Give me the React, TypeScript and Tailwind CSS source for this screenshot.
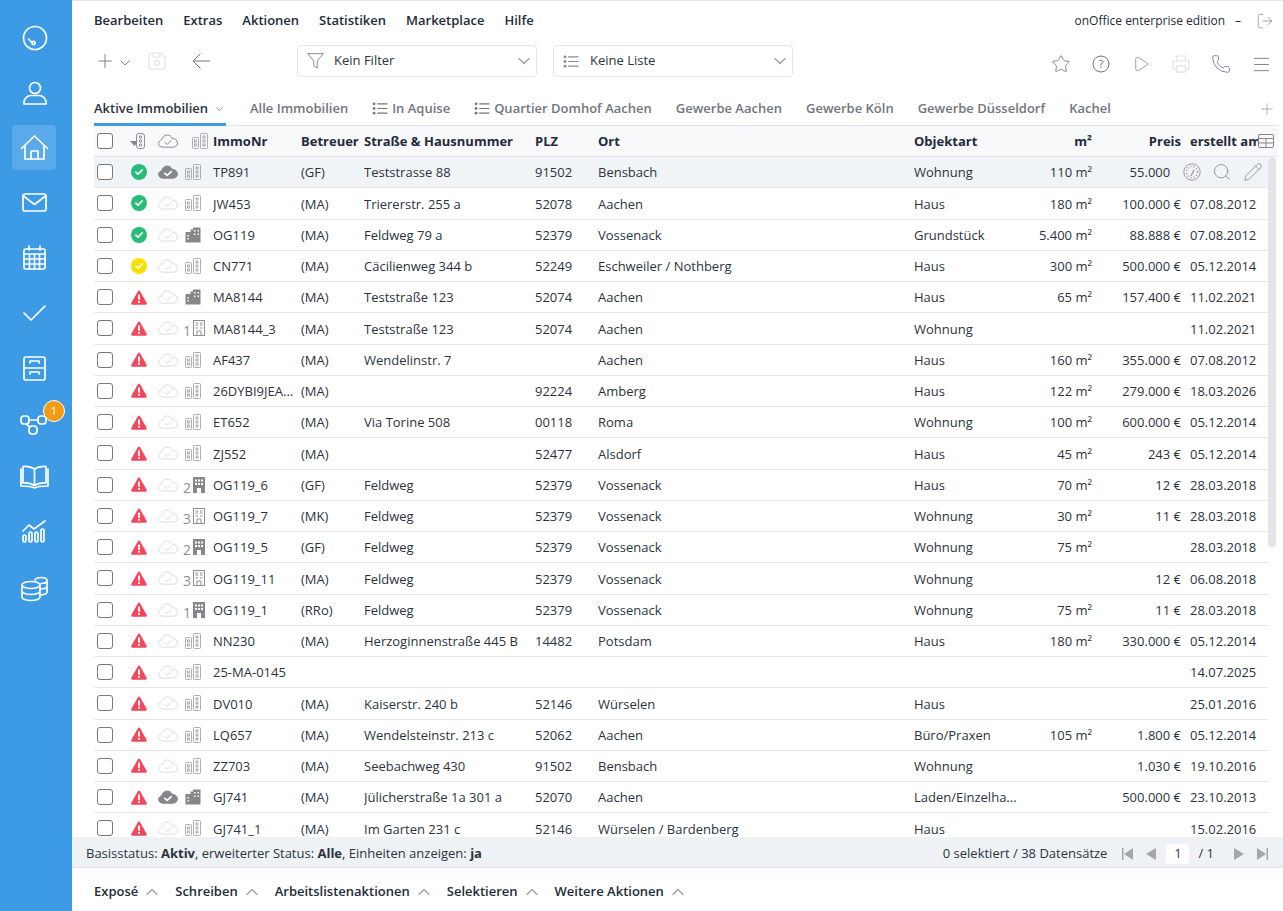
import { ChevronDown, ChevronUp, Plus, Star, Play, Phone, Menu, Search, Pencil, LogOut } from "lucide-react";

type Row = {
  nr: string;
  by?: string;
  street?: string;
  plz?: string;
  city?: string;
  kind?: string;
  qm?: string;
  price?: string;
  date: string;
  status: "ok" | "warn" | "err";
  cloud?: boolean;
  b: "towers" | "solid" | "house" | "houseSolid";
  n?: number;
};

const rows: Row[] = [
  { nr: "TP891", by: "(GF)", street: "Teststrasse 88", plz: "91502", city: "Bensbach", kind: "Wohnung", qm: "110 m²", price: "55.000 €", date: "07.08.2012", status: "ok", cloud: true, b: "towers" },
  { nr: "JW453", by: "(MA)", street: "Triererstr. 255 a", plz: "52078", city: "Aachen", kind: "Haus", qm: "180 m²", price: "100.000 €", date: "07.08.2012", status: "ok", b: "towers" },
  { nr: "OG119", by: "(MA)", street: "Feldweg 79 a", plz: "52379", city: "Vossenack", kind: "Grundstück", qm: "5.400 m²", price: "88.888 €", date: "07.08.2012", status: "ok", b: "solid" },
  { nr: "CN771", by: "(MA)", street: "Cäcilienweg 344 b", plz: "52249", city: "Eschweiler / Nothberg", kind: "Haus", qm: "300 m²", price: "500.000 €", date: "05.12.2014", status: "warn", b: "towers" },
  { nr: "MA8144", by: "(MA)", street: "Teststraße 123", plz: "52074", city: "Aachen", kind: "Haus", qm: "65 m²", price: "157.400 €", date: "11.02.2021", status: "err", b: "solid" },
  { nr: "MA8144_3", by: "(MA)", street: "Teststraße 123", plz: "52074", city: "Aachen", kind: "Wohnung", date: "11.02.2021", status: "err", b: "house", n: 1 },
  { nr: "AF437", by: "(MA)", street: "Wendelinstr. 7", city: "Aachen", kind: "Haus", qm: "160 m²", price: "355.000 €", date: "07.08.2012", status: "err", b: "towers" },
  { nr: "26DYBI9JEA...", by: "(MA)", plz: "92224", city: "Amberg", kind: "Haus", qm: "122 m²", price: "279.000 €", date: "18.03.2026", status: "err", b: "towers" },
  { nr: "ET652", by: "(MA)", street: "Via Torine 508", plz: "00118", city: "Roma", kind: "Wohnung", qm: "100 m²", price: "600.000 €", date: "05.12.2014", status: "err", b: "towers" },
  { nr: "ZJ552", by: "(MA)", plz: "52477", city: "Alsdorf", kind: "Haus", qm: "45 m²", price: "243 €", date: "05.12.2014", status: "err", b: "towers" },
  { nr: "OG119_6", by: "(GF)", street: "Feldweg", plz: "52379", city: "Vossenack", kind: "Haus", qm: "70 m²", price: "12 €", date: "28.03.2018", status: "err", b: "houseSolid", n: 2 },
  { nr: "OG119_7", by: "(MK)", street: "Feldweg", plz: "52379", city: "Vossenack", kind: "Wohnung", qm: "30 m²", price: "11 €", date: "28.03.2018", status: "err", b: "house", n: 3 },
  { nr: "OG119_5", by: "(GF)", street: "Feldweg", plz: "52379", city: "Vossenack", kind: "Wohnung", qm: "75 m²", date: "28.03.2018", status: "err", b: "houseSolid", n: 2 },
  { nr: "OG119_11", by: "(MA)", street: "Feldweg", plz: "52379", city: "Vossenack", kind: "Wohnung", price: "12 €", date: "06.08.2018", status: "err", b: "house", n: 3 },
  { nr: "OG119_1", by: "(RRo)", street: "Feldweg", plz: "52379", city: "Vossenack", kind: "Wohnung", qm: "75 m²", price: "11 €", date: "28.03.2018", status: "err", b: "houseSolid", n: 1 },
  { nr: "NN230", by: "(MA)", street: "Herzoginnenstraße 445 B", plz: "14482", city: "Potsdam", kind: "Haus", qm: "180 m²", price: "330.000 €", date: "05.12.2014", status: "err", b: "towers" },
  { nr: "25-MA-0145", date: "14.07.2025", status: "err", b: "towers" },
  { nr: "DV010", by: "(MA)", street: "Kaiserstr. 240 b", plz: "52146", city: "Würselen", kind: "Haus", date: "25.01.2016", status: "err", b: "towers" },
  { nr: "LQ657", by: "(MA)", street: "Wendelsteinstr. 213 c", plz: "52062", city: "Aachen", kind: "Büro/Praxen", qm: "105 m²", price: "1.800 €", date: "05.12.2014", status: "err", b: "towers" },
  { nr: "ZZ703", by: "(MA)", street: "Seebachweg 430", plz: "91502", city: "Bensbach", kind: "Wohnung", price: "1.030 €", date: "19.10.2016", status: "err", b: "towers" },
  { nr: "GJ741", by: "(MA)", street: "Jülicherstraße 1a 301 a", plz: "52070", city: "Aachen", kind: "Laden/Einzelha...", price: "500.000 €", date: "23.10.2013", status: "err", cloud: true, b: "solid" },
  { nr: "GJ741_1", by: "(MA)", street: "Im Garten 231 c", plz: "52146", city: "Würselen / Bardenberg", kind: "Haus", date: "15.02.2016", status: "err", b: "towers" },
];

function Side({ d, active, badge }: { d: React.ReactNode; active?: boolean; badge?: boolean }) {
  return (
    <div className="relative flex h-[55.2px] w-[72px] items-center justify-center">
      {active && <div className="absolute left-[12px] top-[5px] h-[45px] w-[44px] rounded bg-[#5aa9ea]" />}
      <svg viewBox="0 0 32 32" className="relative -ml-[5px] h-[32px] w-[32px]" fill="none" stroke="#fff" strokeWidth="1.7" strokeLinecap="round" strokeLinejoin="round">
        {d}
      </svg>
      {badge && (
        <span className="absolute left-[43px] top-[4px] flex h-[22px] w-[22px] items-center justify-center rounded-full border border-white bg-[#f39c12] text-[11px] text-white">
          1
        </span>
      )}
    </div>
  );
}

function Sidebar() {
  return (
    <div className="flex h-full w-[72px] shrink-0 flex-col bg-[#3d9be5] pt-[10px]">
      <Side d={<><circle cx="17" cy="16" r="11.5" /><circle cx="15.5" cy="21" r="1.6" /><path d="M14 20.5 L10.5 17" /></>} />
      <Side d={<><circle cx="17" cy="11" r="5.5" /><path d="M6 27 v-1.5 a7 7 0 0 1 7-7 h8 a7 7 0 0 1 7 7 V27 Z" /></>} />
      <Side active d={<><path d="M3.5 16.5 L16.5 4 L29.5 16.5" /><path d="M7 14 V27 H26 V14" /><path d="M13 27 V19 H20 V27" /></>} />
      <Side d={<><rect x="5" y="7" width="23" height="17" rx="2" /><path d="M5.5 9 L16.5 17.5 L27.5 9" /></>} />
      <Side d={<><rect x="6" y="7" width="21" height="20" rx="1.5" /><path d="M6 12 H27 M6 17 H27 M6 22 H27 M11.5 12 V27 M16.5 12 V27 M21.5 12 V27 M11 4 V8 M22 4 V8" /></>} />
      <Side d={<path d="M6 15 L13 22 L27 8" />} />
      <Side d={<g transform="translate(0 -1)"><rect x="6" y="5" width="21" height="23" rx="2" /><path d="M6 16 H27 M12 9 H21 V11 M12 20 H21 V22 M12 9 V11 M12 20 V22" /></g>} />
      <Side badge d={<g transform="translate(-1 -3)"><rect x="4" y="11" width="8" height="8" rx="3" /><rect x="21" y="11" width="8" height="8" rx="3" /><rect x="12" y="21" width="8" height="8" rx="3" /><path d="M12 15 H21 M9 19 L13 22" /></g>} />
      <Side d={<g transform="translate(0 -3)"><path d="M16.5 9 C13 6.5 9 6 5 6.5 V23 C9 22.5 13 23 16.5 25.5 C20 23 24 22.5 28 23 V6.5 C24 6 20 6.5 16.5 9 Z M16.5 9 V25.5" /><path d="M3 9 V26 C8 26 13 26 16.5 28 C20 26 25 26 30 26 V9" /></g>} />
      <Side d={<g transform="translate(0 -3)"><path d="M5 16 L11 10 L16 14 L27 6" /><rect x="5" y="20" width="3" height="7" rx="1.5" /><rect x="11" y="17" width="3" height="10" rx="1.5" /><rect x="17" y="17" width="3" height="10" rx="1.5" /><rect x="23" y="14" width="3" height="13" rx="1.5" /></g>} />
      <Side d={<g transform="translate(0 -1)"><ellipse cx="13" cy="13" rx="9" ry="3.5" /><path d="M4 13 V25 C4 27 8 28.5 13 28.5 S22 27 22 25 V13 M4 19 C4 21 8 22.5 13 22.5 S22 21 22 19" /><path d="M17 8 C18 6 21 5.5 23 5.5 C27 5.5 29 7 29 8.5 V20 C29 21.5 26.5 22.5 23 22.8 M23 11.5 C26 11.5 29 10.5 29 8.5 M23 17 C26 17 29 16 29 14" /></g>} />
    </div>
  );
}

function Check() {
  return <div className="ml-[3px] h-[16px] w-[16px] shrink-0 rounded-[3px] border border-[#77797c] bg-white" />;
}

function Status({ s }: { s: Row["status"] }) {
  if (s === "err") {
    return (
      <svg viewBox="0 0 16 15" className="h-[15px] w-[16px]">
        <path d="M8 0.6 C8.5 0.6 8.9 0.9 9.1 1.3 L15.6 12.8 C16.1 13.7 15.5 14.7 14.5 14.7 H1.5 C0.5 14.7 -0.1 13.7 0.4 12.8 L6.9 1.3 C7.1 0.9 7.5 0.6 8 0.6 Z" fill="#f4465c" />
        <rect x="7.1" y="4.6" width="1.9" height="5.2" fill="#fff" />
        <rect x="7.1" y="10.9" width="1.9" height="1.9" fill="#fff" />
      </svg>
    );
  }
  return (
    <svg viewBox="0 0 16 16" className="h-[16px] w-[16px]">
      <circle cx="8" cy="8" r="8" fill={s === "ok" ? "#27bd78" : "#f6e100"} />
      <path d="M4.8 8.2 L7 10.2 L11.2 6" fill="none" stroke="#fff" strokeWidth="1.7" strokeLinecap="round" strokeLinejoin="round" />
    </svg>
  );
}

function Cloud({ on, head }: { on?: boolean; head?: boolean }) {
  const line = head ? "#8a8d91" : "#dcdde0";
  return (
    <svg viewBox="0 0 20 14" className="h-[14px] w-[20px]">
      <path
        d="M5 13.2 C2.4 13.2 0.6 11.6 0.6 9.4 C0.6 7.5 2 6.1 3.8 5.8 C4.2 3.2 6.3 1 9.2 1 C11.6 1 13.4 2.4 14.2 4.4 C17 4.4 19.4 6.2 19.4 9 C19.4 11.5 17.4 13.2 14.8 13.2 Z"
        fill={on ? "#85878b" : "none"}
        stroke={on ? "#85878b" : line}
        strokeWidth="1"
      />
      <path d="M6.8 8.3 L9.2 10.4 L13.2 6.6" fill="none" stroke={on ? "#fff" : line} strokeWidth={on ? 1.7 : 1} strokeLinecap="round" strokeLinejoin="round" />
    </svg>
  );
}

function Towers() {
  return (
    <svg viewBox="0 0 16 16" className="h-[16px] w-[16px]" fill="none" stroke="#9a9c9f" strokeWidth="0.8">
      <rect x="0.5" y="4.5" width="6" height="11" rx="0.8" />
      <rect x="8.5" y="0.5" width="7" height="15" rx="0.8" />
      <rect x="2.5" y="7" width="2" height="2" />
      <rect x="2.5" y="11" width="2" height="2" />
      <rect x="11" y="3" width="2" height="2" />
      <rect x="11" y="7" width="2" height="2" />
      <rect x="11" y="11" width="2" height="2" />
    </svg>
  );
}

function Building({ b, n }: { b: Row["b"]; n?: number }) {
  if (b === "towers") return <Towers />;
  if (b === "solid") {
    return (
      <svg viewBox="0 0 16 16" className="h-[16px] w-[16px]">
        <path d="M0.5 5 H5.5 V2.5 H8 V0.5 H15.5 V15.5 H0.5 Z" fill="#85878b" />
        <path d="M2.5 8 H4 V9.5 H2.5 Z M2.5 11 H4 V12.5 H2.5 Z M9 3 H10.5 V4.5 H9 Z M12.5 3 H14 V4.5 H12.5 Z M9 6.5 H10.5 V8 H9 Z M12.5 6.5 H14 V8 H12.5 Z" fill="#fff" />
      </svg>
    );
  }
  const solid = b === "houseSolid";
  return (
    <div className="flex items-end">
      <span className="mr-[2px] translate-y-[2px] text-[14px] leading-[14px] text-[#8c8e92]">{n}</span>
      <svg viewBox="0 0 12 16" className="h-[16px] w-[12px]">
        {solid ? (
          <>
            <rect x="0" y="0" width="12" height="16" fill="#85878b" />
            <path d="M2 2.5 H4 V4.5 H2 Z M5 2.5 H7 V4.5 H5 Z M8 2.5 H10 V4.5 H8 Z M2 6 H4 V8 H2 Z M5 6 H7 V8 H5 Z M8 6 H10 V8 H8 Z" fill="#fff" />
            <rect x="4" y="11" width="4" height="5" fill="#fff" />
          </>
        ) : (
          <>
            <rect x="0.5" y="0.5" width="11" height="15" fill="none" stroke="#8c8e92" />
            <path d="M2.5 3 H5 M7 3 H9.5 M2.5 5 H5 M7 5 H9.5 M2.5 8 H5 M7 8 H9.5" stroke="#8c8e92" strokeWidth="1.1" />
            <path d="M4 15.5 V11 H8 V15.5" fill="none" stroke="#8c8e92" />
          </>
        )}
      </svg>
    </div>
  );
}

function ListIcon({ cls }: { cls: string }) {
  return (
    <svg viewBox="0 0 16 14" className={cls} fill="none" stroke="currentColor">
      <circle cx="1.6" cy="2" r="1.5" fill="currentColor" stroke="none" />
      <circle cx="1.6" cy="7" r="1.5" fill="currentColor" stroke="none" />
      <circle cx="1.6" cy="12" r="1.5" fill="currentColor" stroke="none" />
      <path d="M5 2 H16 M5 7 H16 M5 12 H16" strokeWidth="1.2" />
    </svg>
  );
}

function Select({ icon, label }: { icon: React.ReactNode; label: string }) {
  return (
    <div className="flex h-[32px] w-[240px] items-center rounded border border-[#e3e5ea] bg-white pl-[9px] pr-[2px]">
      <span className="flex w-[27px] text-[#868a92]">{icon}</span>
      <span className="flex-1 pb-[1px] text-[13px] text-[#2c3340]">{label}</span>
      <ChevronDown size={20} strokeWidth={1.5} className="-mt-[1px] text-[#9a9da3]" />
    </div>
  );
}

function Gauge({ cls }: { cls: string }) {
  return (
    <svg viewBox="0 0 18 18" className={cls} fill="none" stroke="#8f9093" strokeWidth="0.9">
      <circle cx="9" cy="9" r="8.2" />
      <circle cx="9" cy="9" r="5.6" strokeWidth="1.4" strokeDasharray="1 2" />
      <path d="M8 13 L11 7" strokeWidth="1.1" />
    </svg>
  );
}

function TableRow({ r, hover }: { r: Row; hover?: boolean }) {
  return (
    <div className={`relative flex h-[31.25px] shrink-0 items-center border-b border-[#e6e7ea] text-[13px] text-[#2c3340] ${hover ? "bg-[#f1f4f7]" : "bg-white"}`}>
      <div className="w-[36px]"><Check /></div>
      <div className="flex w-[28px] pl-[1px]"><Status s={r.status} /></div>
      <div className="flex w-[27px]"><Cloud on={r.cloud} /></div>
      <div className={`flex w-[28px] ${r.n ? "justify-end pr-[8px]" : ""}`}><Building b={r.b} n={r.n} /></div>
      <div className="w-[88px] truncate pr-[2px] pt-[2px]">{r.nr}</div>
      <div className="w-[63px] pt-[2px]">{r.by}</div>
      <div className="w-[171px] truncate pt-[2px]">{r.street}</div>
      <div className="w-[63px] pt-[2px]">{r.plz}</div>
      <div className="w-[316px] truncate pt-[2px]">{r.city}</div>
      <div className="w-[103px] truncate pt-[2px]">{r.kind}</div>
      <div className="w-[75px] pt-[2px] text-right">{r.qm}</div>
      <div className="w-[89px] pt-[2px] text-right">{r.price}</div>
      <div className="ml-[9px] w-[78px] pt-[2px]">{r.date}</div>
      {hover && (
        <div className="absolute right-0 top-0 flex h-[30px] w-[98px] items-center justify-between bg-[#f1f4f7] pl-[13px] pr-[5px]">
          <Gauge cls="h-[18px] w-[18px]" />
          <Search size={20} strokeWidth={1} className="text-[#85878b]" />
          <Pencil size={20} strokeWidth={1} className="text-[#85878b]" />
        </div>
      )}
    </div>
  );
}

export default function App() {
  return (
    <div className="flex h-[911px] w-[1283px] overflow-hidden bg-white font-['Open_Sans',sans-serif]">
      <Sidebar />
      <div className="flex min-w-0 flex-1 flex-col border-t border-[#e4e4e6]">
        <div className="flex h-[38px] shrink-0 items-center pl-[22px] pr-[9px] pt-[2px] text-[13px] font-semibold text-[#232b3a]">
          <div className="flex gap-[20px]">
            <span>Bearbeiten</span>
            <span>Extras</span>
            <span>Aktionen</span>
            <span>Statistiken</span>
            <span>Marketplace</span>
            <span>Hilfe</span>
          </div>
          <div className="ml-auto flex items-center text-[12px] font-normal">
            <span>onOffice enterprise edition</span>
            <span className="ml-[10px]">–</span>
            <LogOut size={18} strokeWidth={1} className="ml-[15px] text-[#868a92]" />
          </div>
        </div>

        <div className="flex h-[44px] shrink-0 items-center pl-[22px] pr-[2px]">
          <Plus size={22} strokeWidth={1} className="text-[#6f7480]" />
          <ChevronDown size={16} strokeWidth={1.5} className="ml-[1px] mt-[4px] text-[#80848c]" />
          <svg viewBox="0 0 18 18" className="ml-[15px] h-[18px] w-[18px]" fill="none" stroke="#dfe2e8" strokeWidth="1.1">
            <path d="M1 3 a2 2 0 0 1 2-2 H13 L17 5 V15 a2 2 0 0 1-2 2 H3 a2 2 0 0 1-2-2 Z" />
            <path d="M5 1 V5 H12 V1" />
            <circle cx="9" cy="11" r="2.4" />
          </svg>
          <svg viewBox="0 0 18 16" className="ml-[26px] h-[16px] w-[18px]" fill="none" stroke="#6f7480">
            <path d="M18 8 H1 M8.5 0.5 L1 8 L8.5 15.5" />
          </svg>
          <div className="ml-[87px] flex gap-[16px]">
            <Select
              label="Kein Filter"
              icon={
                <svg viewBox="0 0 17 16" className="h-[16px] w-[17px]" fill="none" stroke="currentColor">
                  <path d="M0.7 0.7 H16.3 L10.2 8 V15 L6.8 12.6 V8 Z" strokeLinejoin="round" />
                </svg>
              }
            />
            <Select label="Keine Liste" icon={<ListIcon cls="h-[13px] w-[16px]" />} />
          </div>
          <div className="ml-auto mt-[6px] flex items-center [&>*]:w-[40px]">
            <span className="flex justify-center"><Star size={20} strokeWidth={1} className="text-[#6f7480]" /></span>
            <span className="flex justify-center">
              <svg viewBox="0 0 18 18" className="h-[18px] w-[18px]" fill="none" stroke="#6f7480">
                <circle cx="9" cy="9" r="8" />
                <text x="9" y="13" textAnchor="middle" fontSize="11" fill="#6f7480" stroke="none">?</text>
              </svg>
            </span>
            <span className="flex justify-center"><Play size={18} strokeWidth={1} className="text-[#6f8098]" /></span>
            <span className="flex justify-center">
              <svg viewBox="0 0 18 18" className="h-[18px] w-[18px]" fill="none" stroke="#dfe2e8" strokeWidth="1.2">
                <path d="M4.5 6 V1 H13.5 V6 M4.5 14 H1 V6 H17 V14 H13.5" />
                <rect x="4.5" y="11" width="9" height="6" />
              </svg>
            </span>
            <span className="flex justify-center"><Phone size={20} strokeWidth={1} className="text-[#6f7480]" /></span>
            <span className="flex justify-center"><Menu size={21} strokeWidth={1} className="text-[#6f7480]" /></span>
          </div>
        </div>

        <div className="flex h-[43px] shrink-0 items-end pl-[22px] pr-[5px] text-[13px] font-semibold text-[#72757b]">
          <div className="flex h-[43px] w-[132px] items-center whitespace-nowrap border-b-[3px] border-[#3d9be5] pt-[11px] text-[#2c3340]">
            Aktive Immobilien
            <ChevronDown size={16} strokeWidth={1.5} className="ml-[5px] mt-[1px] text-[#80848c]" />
          </div>
          <div className="flex h-[43px] flex-1 items-center gap-[24px] border-b border-[#e4e5e8] pt-[9px] pl-[24px]">
            <span>Alle Immobilien</span>
            <span className="flex items-center gap-[4px]"><ListIcon cls="h-[13px] w-[16px]" />In Aquise</span>
            <span className="flex items-center gap-[4px]"><ListIcon cls="h-[13px] w-[16px]" />Quartier Domhof Aachen</span>
            <span>Gewerbe Aachen</span>
            <span>Gewerbe Köln</span>
            <span>Gewerbe Düsseldorf</span>
            <span>Kachel</span>
            <Plus size={18} strokeWidth={1.2} className="ml-auto mr-[2px] text-[#a5a7ab]" />
          </div>
        </div>

        <div className="ml-[22px] mr-[5px] flex h-[31px] shrink-0 items-center border-b border-[#e4e5e8] bg-[#f8f9fa] text-[13px] font-bold text-[#232b3a]">
          <div className="w-[36px]"><Check /></div>
          <div className="flex w-[28px]">
            <svg viewBox="0 0 16 16" className="h-[16px] w-[16px]" fill="none" stroke="#85878b">
              <rect x="6.5" y="0.5" width="8" height="15" rx="2.5" strokeWidth="0.9" />
              <circle cx="10.5" cy="4" r="1.2" />
              <circle cx="10.5" cy="8" r="1.2" />
              <circle cx="10.5" cy="12" r="1.2" />
              <path d="M0 8 H7 V10 L4.5 13 Z" fill="#85878b" stroke="none" />
            </svg>
          </div>
          <div className="flex w-[27px]"><Cloud head /></div>
          <div className="flex w-[28px] pl-[7px]"><Towers /></div>
          <div className="w-[88px] pt-[2px]">ImmoNr</div>
          <div className="w-[63px] pt-[2px]">Betreuer</div>
          <div className="w-[171px] pt-[2px]">Straße & Hausnummer</div>
          <div className="w-[63px] pt-[2px]">PLZ</div>
          <div className="w-[316px] pt-[2px]">Ort</div>
          <div className="w-[103px] pt-[2px]">Objektart</div>
          <div className="w-[75px] pt-[2px] text-right">m²</div>
          <div className="w-[89px] pt-[2px] text-right">Preis</div>
          <div className="ml-[9px] w-[68px] overflow-hidden whitespace-nowrap pt-[2px]">erstellt am</div>
          <svg viewBox="0 0 16 14" className="h-[14px] w-[16px]" fill="none" stroke="#85878b">
            <rect x="0.5" y="0.5" width="15" height="13" rx="1.5" />
            <path d="M0.5 4.5 H15.5 M0.5 9 H15.5 M8 4.5 V13.5" />
          </svg>
        </div>

        <div className="ml-[22px] mr-[5px] flex min-h-0 flex-1 overflow-hidden">
          <div className="flex min-w-0 flex-1 flex-col overflow-hidden">
            {rows.map((r, i) => (
              <TableRow key={r.nr} r={r} hover={i === 0} />
            ))}
          </div>
          <div className="w-[10px] shrink-0 pr-[2px]">
            <div className="h-[390px] w-[8px] rounded-[4px] bg-[#e3e5e9]" />
          </div>
        </div>

        <div className="flex h-[31px] shrink-0 items-center border-b border-[#e1e4e8] bg-[#eff2f5] pl-[14px] pr-[15px] text-[13px] text-[#2c3340]">
          <span className="pt-[3px]">
            Basisstatus: <b>Aktiv</b>, erweiterter Status: <b>Alle</b>, Einheiten anzeigen: <b>ja</b>
          </span>
          <span className="ml-auto pt-[3px]">0 selektiert / 38 Datensätze</span>
          <div className="ml-[15px] flex items-center pt-[3px] text-[#a3a6ab]">
            <svg viewBox="0 0 12 12" className="h-[12px] w-[12px]" fill="currentColor"><path d="M0 0 H1.5 V12 H0 Z M11 0 V12 L2 6 Z" /></svg>
            <svg viewBox="0 0 12 12" className="ml-[11px] h-[12px] w-[12px]" fill="currentColor"><path d="M11 0 V12 L1 6 Z" /></svg>
            <span className="ml-[9px] flex h-[20px] w-[23px] items-center justify-center rounded bg-white text-[13px] text-[#2c3340]">1</span>
            <span className="ml-[9px] text-[13px] text-[#2c3340]">/ 1</span>
            <svg viewBox="0 0 12 12" className="ml-[19px] h-[12px] w-[12px]" fill="currentColor"><path d="M1 0 V12 L11 6 Z" /></svg>
            <svg viewBox="0 0 12 12" className="ml-[11px] h-[12px] w-[12px]" fill="currentColor"><path d="M12 0 H10.5 V12 H12 Z M1 0 V12 L10 6 Z" /></svg>
          </div>
        </div>

        <div className="flex h-[43px] shrink-0 items-center gap-[13px] pl-[22px] pt-[4px] text-[13px] font-semibold text-[#232b3a]">
          {["Exposé", "Schreiben", "Arbeitslistenaktionen", "Selektieren", "Weitere Aktionen"].map((t) => (
            <span key={t} className="flex items-center gap-[4px]">
              {t}
              <ChevronUp size={20} strokeWidth={1.5} className="text-[#9a9da3]" />
            </span>
          ))}
        </div>
      </div>
    </div>
  );
}
